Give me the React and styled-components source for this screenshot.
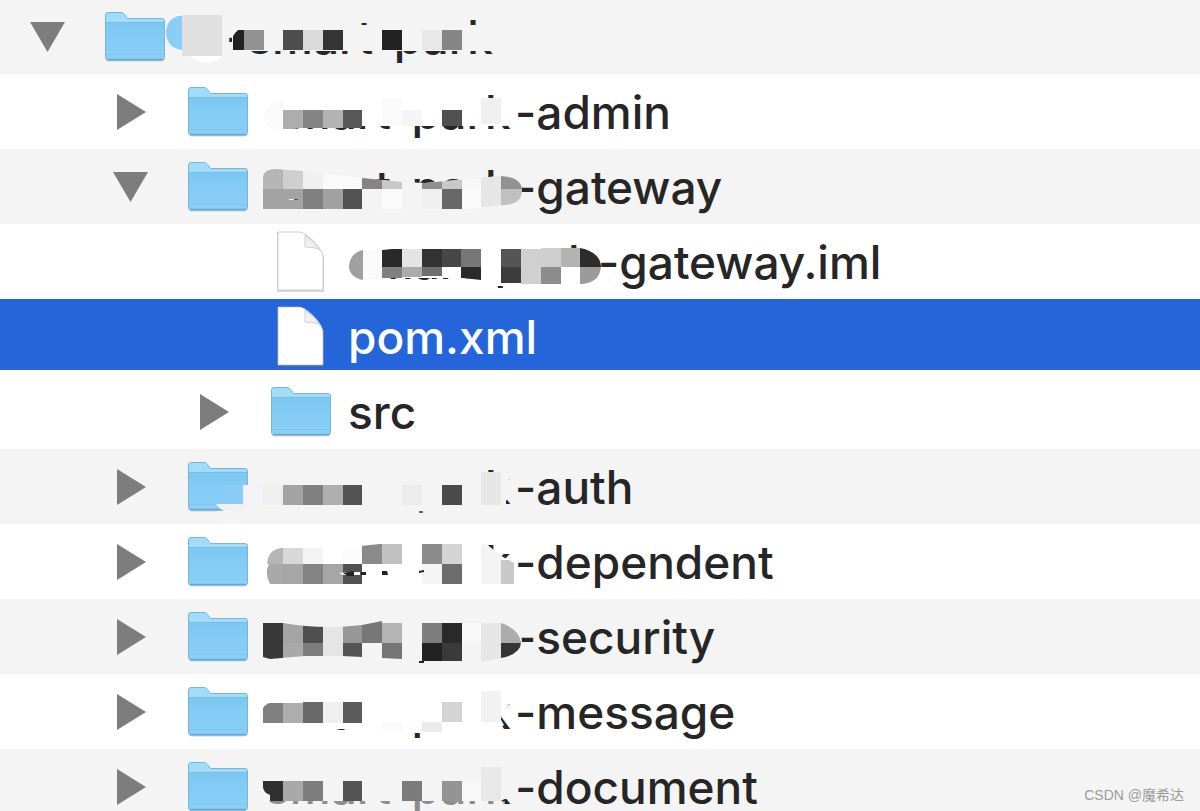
import React from "react";
import styled, { createGlobalStyle } from "styled-components";

const GlobalStyle = createGlobalStyle`
  * { box-sizing: border-box; }
  body {
    margin: 0;
    overflow: hidden;
    background: #fff;
    font-family: Inter, "Noto Sans CJK SC", sans-serif;
  }
`;

const Window = styled.main`
  position: relative;
  height: 100vh;
  overflow: hidden;
`;

const Tree = styled.ul`
  list-style: none;
  margin: -1px 0 0;
  padding: 0;
`;

const Row = styled.li`
  position: relative;
  display: flex;
  align-items: center;
  height: 75px;
  padding-left: ${(p) => 30 + p.$level * 83}px;
  background: ${(p) =>
    p.$selected ? "linear-gradient(#2465d9 71px, #fff 71px)" : p.$shaded ? "#f4f4f4" : "#fff"};
  color: ${(p) => (p.$selected ? "#fff" : "#262626")};
`;

const Disclosure = styled.button`
  display: flex;
  flex: none;
  width: 36px;
  height: 36px;
  margin-right: 38px;
  padding: 0;
  border: 0;
  background: none;
`;

const Spacer = styled.span`
  flex: none;
  width: 74px;
`;

const IconSlot = styled.span`
  display: flex;
  flex: none;
  justify-content: center;
  width: 62px;
  margin-right: 16px;
`;

const Name = styled.span`
  display: flex;
  font-size: 46px;
  font-weight: 500;
  line-height: 56px;
  white-space: pre;
`;

const Prefix = styled.span`
  flex: none;
  width: 250px;
  margin-left: ${(p) => (p.$indented ? 44 : 0)}px;
`;

const Overlay = styled.svg`
  position: absolute;
  top: 0;
  left: 0;
  pointer-events: none;
  overflow: visible;
`;

const Watermark = styled.div`
  position: absolute;
  right: 16px;
  bottom: 6px;
  color: #9b9b9b;
  font: 14px/20px "Liberation Sans", "Noto Sans CJK SC", sans-serif;
`;

const Triangle = ({ open }) => (
  <svg width="36" height="36" viewBox="0 0 36 36" aria-hidden="true">
    <path d={open ? "M0 3H35L17.5 33Z" : "M4 0L33 18L4 36Z"} fill="#7d7d7d" />
  </svg>
);

const Folder = () => (
  <svg width="62" height="52" viewBox="0 0 62 52" aria-hidden="true">
    <defs>
      <linearGradient id="folderFront" x1="0" y1="0" x2="0" y2="1">
        <stop offset="0" stopColor="#7cc8f1" />
        <stop offset="1" stopColor="#8bd0f9" />
      </linearGradient>
    </defs>
    <path d="M2 47.5Q2 50.500 5 50.500H57Q60 50.500 60.500 47V44H2Z" fill="#5b90ab" opacity=".35" />
    <path d="M1.500 4Q1.500 1.500 4 1.500H17Q19 1.500 20.500 3.500L23.500 7.500H58Q60.500 7.500 60.500 10V46.500Q60.500 49 58 49H4Q1.500 49 1.500 46.500Z" fill="#a1dcfb" stroke="#7ab5d3" />
    <path d="M2 11.500H60V46.500Q60 48.500 58 48.500H4Q2 48.500 2 46.500Z" fill="url(#folderFront)" />
    <path d="M2 11.500H60" stroke="#6cb4dc" strokeWidth="1" opacity=".65" />
    <path d="M2 43.500H60" stroke="#6cb4dc" strokeWidth="1" opacity=".3" />
    <path d="M3 48.500H59" stroke="#6aa9cb" strokeWidth="1.500" />
  </svg>
);

const Document = () => (
  <svg width="50" height="64" viewBox="0 0 50 64" aria-hidden="true">
    <defs>
      <linearGradient id="pageFold" x1="0" y1="1" x2="1" y2="0">
        <stop offset="0" stopColor="#fff" />
        <stop offset="1" stopColor="#d9d9d9" />
      </linearGradient>
    </defs>
    <path d="M1 2H24C31 3 46 18 48 27V62H1Z" fill="#777" opacity=".28" />
    <path d="M2 2H24C31 3 45 17 47 26V60H2Z" fill="#fff" stroke="#bbb" strokeOpacity=".65" />
    <path d="M29 5Q40 12 45 21Q41 17 29 17Z" fill="url(#pageFold)" stroke="#cfcfcf" />
  </svg>
);

/* Each mosaic has a patch that hides part of the name, and blocks [x, y, width, height, colour]. */
const mosaics = {
  root: {
    patch: "M222 26H482V24H500V52H244L232 45V36Z",
    clip: "M181 16H222V57H233V53Q227 41 238 31H500V52H181Z",
    cells: [
      [182, 16, 40, 41, "#e0e0e0"], [233, 31, 11, 20, "#222"], [244, 31, 20, 20, "#929292"],
      [283, 31, 20, 20, "#4d4d4d"], [303, 31, 20, 20, "#dadada"], [323, 31, 20, 20, "#343434"],
      [382, 31, 20, 20, "#222"], [422, 31, 20, 20, "#e8e8e8"], [442, 31, 20, 20, "#868686"],
    ],
    marks: [["M182 17H178Q166 21 166 34Q167 49 182 51Z", "#8acdf6"], ["M190 57H222Q207 71 190 57Z", "#fff"], ["M182 50H222V57H182Z", "#e0e0e0"]],
  },
  admin: {
    patch: "M264 24H517V50L505 52H264Z",
    clip: "M278 28L283 20H520V54H300Q284 57 278 57Q264 55 264 43Q265 29 278 28Z",
    cells: [
      [264, 26, 19, 32, "#fafafa"], [283, 36, 20, 19, "#adadad"], [303, 36, 20, 18, "#848484"],
      [323, 36, 20, 18, "#b3b3b3"], [343, 36, 19, 18, "#575757"], [382, 24, 20, 28, "#fafafa"],
      [402, 36, 20, 16, "#f5f5f5"], [442, 36, 20, 16, "#505050"], [481, 24, 20, 26, "#f0f0f0"],
    ],
  },
  gateway: {
    patch: "M263 28Q264 20 276 20L303 22L362 29L402 33L425 34L500 27Q522 28 522 41Q522 55 505 56L481 58L440 67H400L380 60H263Z",
    cells: [
      [263, 20, 20, 20, "#b5b5b5"], [283, 20, 20, 20, "#cfcfcf"], [303, 20, 20, 20, "#f0f0f0"],
      [323, 20, 39, 20, "#fafafa"], [362, 28, 20, 12, "#848484"], [382, 30, 20, 10, "#c8c8c8"],
      [422, 32, 20, 8, "#909090"], [442, 30, 20, 10, "#c8c8c8"], [462, 30, 19, 10, "#f8f8f8"],
      [481, 26, 20, 32, "#e6e6e6"], [501, 26, 21, 14, "#929292"], [263, 40, 40, 20, "#a3a3a3"],
      [303, 40, 20, 20, "#808080"], [323, 40, 20, 20, "#a1a1a1"], [343, 40, 19, 20, "#525252"],
      [382, 40, 20, 20, "#fafafa"], [422, 40, 20, 20, "#f0f0f0"], [442, 40, 20, 20, "#686868"],
      [462, 40, 19, 20, "#fafafa"], [501, 40, 21, 17, "#c0c0c0"],
    ],
    marks: [["M289 50H294V51H289Z", "#eee"], ["M294 50H298V51H294Z", "#555"]],
  },
  iml: {
    patch: "M345 26L383 26L400 24H580Q600 28 601 42Q600 59 581 60H507L505 62H480V56L463 54L382 54L378 58H345Z",
    clip: "M363 26L383 26L400 24H580Q600 28 601 42Q600 59 581 60H501L481 56L463 54L382 54L363 56Q349 53 349 42Q350 29 363 26Z",
    cells: [
      [349, 26, 14, 30, "#a0a0a0"], [363, 26, 19, 30, "#fafafa"], [382, 25, 20, 18, "#292929"],
      [402, 25, 20, 18, "#e4e4e4"], [422, 25, 20, 18, "#333"], [442, 25, 19, 18, "#474747"],
      [461, 25, 20, 18, "#777"], [382, 43, 20, 11, "#808080"], [402, 43, 20, 10, "#ababab"],
      [422, 43, 20, 9, "#6e6e6e"], [461, 43, 20, 13, "#2a2a2a"], [501, 25, 20, 18, "#555"],
      [501, 43, 20, 16, "#3c3c3c"], [521, 25, 20, 35, "#d0d0d0"], [541, 24, 20, 19, "#cfcfcf"],
      [541, 43, 20, 17, "#8d8d8d"], [561, 24, 19, 19, "#b3b3b3"], [580, 24, 21, 19, "#2c2c2c"],
      [580, 43, 21, 17, "#9b9b9b"],
    ],
  },
  auth: {
    patch: "M243 36H264V23H506L509 30V48L506 52V67H217V62H243Z",
    cells: [
      [243, 36, 20, 20, "#f2f3f9"], [263, 36, 20, 20, "#efefef"], [283, 36, 20, 20, "#a3a3a3"],
      [303, 36, 20, 20, "#808080"], [323, 36, 20, 20, "#afafaf"], [343, 36, 19, 20, "#525252"],
      [402, 36, 20, 20, "#ececec"], [442, 36, 20, 20, "#4a4a4a"], [481, 23, 20, 33, "#e6e6e6"],
    ],
    marks: [["M224 36H243V55H224Z", "#8ccdf8"], ["M216 55H247V62H225Q220 61 216 55Z", "#f1f1f1"], ["M419 62H423V64H419Z", "#666"]],
  },
  dependent: {
    patch: "M264 20H486L500 31L511 38V67H264Z",
    clip: "M267 40Q268 25 282 24H340L380 20H486L500 31L514 39V60H270Q264 50 269 40Z",
    cells: [
      [267, 24, 16, 16, "#b6b6b6"], [283, 24, 20, 16, "#d8d8d8"], [303, 24, 20, 16, "#f4f4f4"],
      [343, 24, 19, 16, "#fcfcfc"], [362, 20, 20, 20, "#8a8a8a"], [382, 20, 20, 20, "#c0c0c0"],
      [422, 20, 20, 20, "#8b8b8b"], [442, 20, 20, 20, "#d4d4d4"], [481, 20, 20, 40, "#f4f4f4"],
      [266, 40, 17, 20, "#a9a9a9"], [283, 40, 20, 20, "#a6a6a6"], [303, 40, 20, 20, "#838383"],
      [323, 40, 20, 20, "#a6a6a6"], [343, 40, 19, 20, "#515151"], [422, 40, 20, 20, "#f5f5f5"],
      [442, 40, 20, 20, "#6c6c6c"], [501, 36, 13, 24, "#c8c8c8"],
    ],
    marks: [["M339 49L349 48H360V51H343Z", "#fff"], ["M343 49L354 47V52H348ZM361 48H366V51H361ZM382 47H387L388 51H382ZM419 47L424 46V48L419 49Z", "#222"], ["M330 75H412Q370 81 330 75Z", "#fff"]],
  },
  security: {
    patch: "M263 20H500Q521 25 522 42Q521 56 500 60V63H424V67H263Z",
    clip: "M263 24H283Q322 31 362 26L382 22L402 24H501Q519 30 521 43Q521 55 501 59L481 63H422L402 60L342 57H305L270 60L263 58Z",
    cells: [
      [263, 24, 20, 36, "#383838"], [283, 24, 20, 20, "#a4a4a4"], [303, 24, 20, 20, "#4f4f4f"],
      [323, 24, 20, 36, "#e5e5e5"], [343, 24, 19, 20, "#979797"], [362, 22, 20, 22, "#777"],
      [382, 24, 20, 20, "#b4b4b4"], [422, 24, 20, 20, "#7d7d7d"], [442, 24, 20, 20, "#2a2a2a"],
      [462, 24, 19, 20, "#f8f8f8"], [481, 24, 20, 38, "#e6e6e6"], [501, 24, 21, 20, "#acacac"],
      [283, 44, 20, 15, "#a9a9a9"], [303, 44, 20, 15, "#7d7d7d"], [343, 44, 19, 15, "#555"],
      [382, 44, 20, 17, "#757575"], [422, 44, 20, 18, "#222"], [442, 44, 20, 18, "#3a3a3a"],
      [501, 44, 21, 17, "#353535"],
    ],
    marks: [["M419 62H424V64H419Z", "#222"]],
  },
  message: {
    patch: "M263 17H509V30L502 40L500 44L504 51L495 59H415L400 55H263Z",
    clip: "M263 34Q266 28 277 28H310L481 16H501V60H263Z",
    cells: [
      [263, 29, 20, 20, "#808080"], [283, 29, 20, 20, "#adadad"], [303, 28, 20, 21, "#696969"],
      [323, 28, 20, 21, "#efefef"], [343, 28, 19, 21, "#5c5c5c"], [442, 28, 20, 20, "#d4d4d4"],
      [481, 17, 20, 31, "#f2f2f2"], [382, 48, 20, 9, "#fafafa"], [422, 48, 20, 10, "#ebebeb"],
    ],
  },
  document: {
    patch: "M263 18H521L517 50H505L500 52H263Z",
    clip: "M263 32H480V17H503V53H270V46Q263 43 263 38Z",
    cells: [
      [263, 32, 20, 20, "#303030"], [283, 32, 20, 20, "#a9a9a9"], [303, 32, 20, 20, "#7d7d7d"],
      [343, 32, 19, 20, "#545454"], [402, 32, 20, 20, "#7b7b7b"], [442, 32, 20, 20, "#949494"],
      [462, 32, 19, 20, "#f8f8f8"], [481, 18, 20, 34, "#e8e8e8"],
    ],
    marks: [["M263 52H505V75H263Z", "#f4f4f480"]],
  },
};

function Mosaic({ id, background }) {
  const { patch, clip, cells, marks = [] } = mosaics[id];
  return (
    <Overlay width="620" height="75" viewBox="0 0 620 75" aria-hidden="true">
      <clipPath id={`${id}Shape`}><path d={clip || patch} /></clipPath>
      <path d={patch} fill={background} />
      <g clipPath={`url(#${id}Shape)`} shapeRendering="crispEdges">
        {cells.map(([x, y, width, height, fill]) => (
          <rect key={`${x}-${y}`} x={x} y={y} width={width} height={height} fill={fill} />
        ))}
      </g>
      {marks.map(([d, fill]) => <path key={d} d={d} fill={fill} />)}
    </Overlay>
  );
}

const items = [
  { level: 0, kind: "folder", open: true, prefix: "-smart-park", suffix: "", mosaic: "root" },
  { level: 1, kind: "folder", prefix: "smart-park", suffix: "-admin", mosaic: "admin" },
  { level: 1, kind: "folder", open: true, prefix: "smart-park", suffix: "-gateway", mosaic: "gateway" },
  { level: 2, kind: "file", prefix: "smart-park", suffix: "-gateway.iml", mosaic: "iml" },
  { level: 2, kind: "file", suffix: "pom.xml", selected: true },
  { level: 2, kind: "folder", suffix: "src" },
  { level: 1, kind: "folder", prefix: "smart-park", suffix: "-auth", mosaic: "auth" },
  { level: 1, kind: "folder", prefix: "smart-park", suffix: "-dependent", mosaic: "dependent" },
  { level: 1, kind: "folder", prefix: "smart-park", suffix: "-security", mosaic: "security" },
  { level: 1, kind: "folder", prefix: "smart-park", suffix: "-message", mosaic: "message" },
  { level: 1, kind: "folder", prefix: "smart-park", suffix: "-document", mosaic: "document" },
];

export default function App() {
  return (
    <Window>
      <GlobalStyle />
      <Tree>
        {items.map((item, i) => (
          <Row key={i} $level={item.level} $shaded={i % 2 === 0} $selected={item.selected}>
            {item.kind === "folder" ? (
              <Disclosure type="button" aria-expanded={!!item.open} aria-label="Toggle folder">
                <Triangle open={item.open} />
              </Disclosure>
            ) : <Spacer />}
            <IconSlot>{item.kind === "folder" ? <Folder /> : <Document />}</IconSlot>
            <Name>
              {item.prefix && <Prefix $indented={item.level === 0}>{item.prefix}</Prefix>}
              {item.suffix}
            </Name>
            {item.mosaic && <Mosaic id={item.mosaic} background={i % 2 === 0 ? "#f4f4f4" : "#fff"} />}
          </Row>
        ))}
      </Tree>
      <Watermark>CSDN @魔希达</Watermark>
    </Window>
  );
}
